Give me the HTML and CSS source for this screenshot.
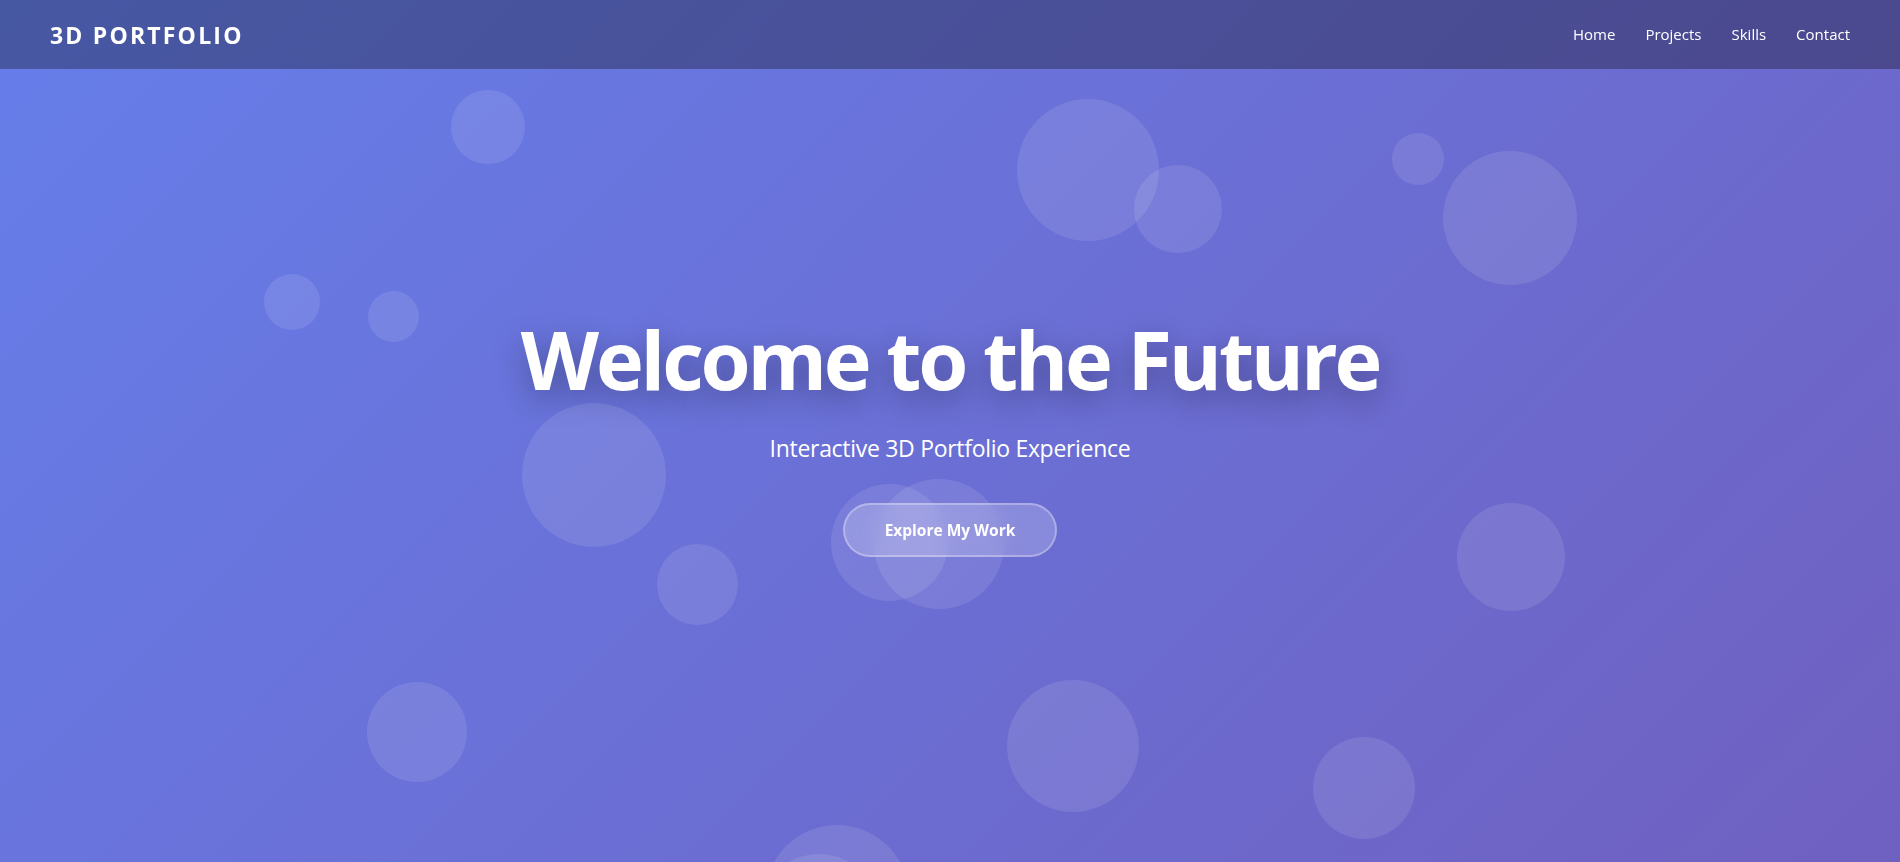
FILE: index.html
```html
<!DOCTYPE html>
<html lang="en">
<head>
<meta charset="utf-8">
<title>3D Portfolio</title>
<link rel="stylesheet" href="styles.css">
</head>
<body>
<header class="site-header">
  <div class="logo">3D PORTFOLIO</div>
  <nav class="nav">
    <a class="nav-link" href="#home">Home</a>
    <a class="nav-link" href="#projects">Projects</a>
    <a class="nav-link" href="#skills">Skills</a>
    <a class="nav-link" href="#contact">Contact</a>
  </nav>
</header>
<section class="hero" id="home">
  <div class="particles">
    <span class="particle p1"></span>
    <span class="particle p2"></span>
    <span class="particle p3"></span>
    <span class="particle p4"></span>
    <span class="particle p5"></span>
    <span class="particle p6"></span>
    <span class="particle p7"></span>
    <span class="particle p8"></span>
    <span class="particle p9"></span>
    <span class="particle p10"></span>
    <span class="particle p11"></span>
    <span class="particle p12"></span>
    <span class="particle p13"></span>
    <span class="particle p14"></span>
    <span class="particle p15"></span>
    <span class="particle p16"></span>
    <span class="particle p17"></span>
  </div>
  <div class="hero-content">
    <h1 class="hero-title">Welcome to the Future</h1>
    <p class="hero-subtitle">Interactive 3D Portfolio Experience</p>
    <a class="cta" href="#projects">Explore My Work</a>
  </div>
</section>
</body>
</html>
```
FILE: styles.css
```css
* { box-sizing: border-box; }

html, body {
  margin: 0;
  padding: 0;
}

body {
  font-family: "Open Sans", "Noto Sans", sans-serif;
  color: #fff;
  overflow: hidden;
  background: #667eea;
}

.site-header {
  position: fixed;
  top: 0;
  left: 0;
  right: 0;
  height: 69px;
  padding: 0 50px;
  display: flex;
  align-items: center;
  justify-content: space-between;
  background: rgba(0, 0, 0, 0.3);
  z-index: 10;
}

.logo {
  font-size: 23px;
  font-weight: 700;
  letter-spacing: 2.2px;
  line-height: 1;
  margin-top: 1px;
}

.nav {
  display: flex;
  gap: 30px;
  align-items: center;
}

.nav-link {
  color: #fff;
  text-decoration: none;
  font-size: 15px;
  line-height: 1;
}

.hero {
  position: relative;
  height: 862px;
  display: flex;
  align-items: center;
  justify-content: center;
  padding-top: 5px;
  overflow: hidden;
  background-image: linear-gradient(135deg, #667eea 0%, #764ba2 100%);
  background-size: 100% 2860px;
  background-repeat: no-repeat;
  background-position: top left;
}

.particles {
  position: absolute;
  inset: 0;
  pointer-events: none;
}

.particle {
  position: absolute;
  border-radius: 50%;
  background: rgba(255, 255, 255, 0.1);
}

.p1  { left: 451px;  top: 90px;  width: 74px;  height: 74px; }
.p2  { left: 1017px; top: 99px;  width: 142px; height: 142px; }
.p3  { left: 1134px; top: 165px; width: 88px;  height: 88px; }
.p4  { left: 1392px; top: 133px; width: 52px;  height: 52px; }
.p5  { left: 1443px; top: 151px; width: 134px; height: 134px; }
.p6  { left: 264px;  top: 274px; width: 56px;  height: 56px; }
.p7  { left: 368px;  top: 291px; width: 51px;  height: 51px; }
.p8  { left: 522px;  top: 403px; width: 144px; height: 144px; }
.p9  { left: 831px;  top: 484px; width: 117px; height: 117px; }
.p10 { left: 874px;  top: 479px; width: 130px; height: 130px; }
.p11 { left: 657px;  top: 544px; width: 81px;  height: 81px; }
.p12 { left: 1457px; top: 503px; width: 108px; height: 108px; }
.p13 { left: 367px;  top: 682px; width: 100px; height: 100px; }
.p14 { left: 1007px; top: 680px; width: 132px; height: 132px; }
.p15 { left: 1313px; top: 737px; width: 102px; height: 102px; }
.p16 { left: 765px;  top: 825px; width: 144px; height: 144px; }
.p17 { left: 759px;  top: 854px; width: 120px; height: 120px; }

.hero-content {
  position: relative;
  z-index: 1;
  display: flex;
  flex-direction: column;
  align-items: center;
  text-align: center;
}

.hero-title {
  margin: 0 0 24px;
  font-size: 81px;
  font-weight: 700;
  line-height: 1.2;
  letter-spacing: -3.2px;
  text-shadow: 0 10px 30px rgba(0, 0, 0, 0.3);
}

.hero-subtitle {
  margin: 0 0 37px;
  font-size: 23px;
  line-height: 1.5;
  letter-spacing: -0.3px;
}

.cta {
  display: inline-block;
  height: 54px;
  padding: 0 40px;
  border: 2px solid rgba(255, 255, 255, 0.3);
  border-radius: 50px;
  background: rgba(255, 255, 255, 0.2);
  backdrop-filter: blur(10px);
  color: #fff;
  text-decoration: none;
  font-size: 15.5px;
  font-weight: 700;
  line-height: 50px;
}
```
